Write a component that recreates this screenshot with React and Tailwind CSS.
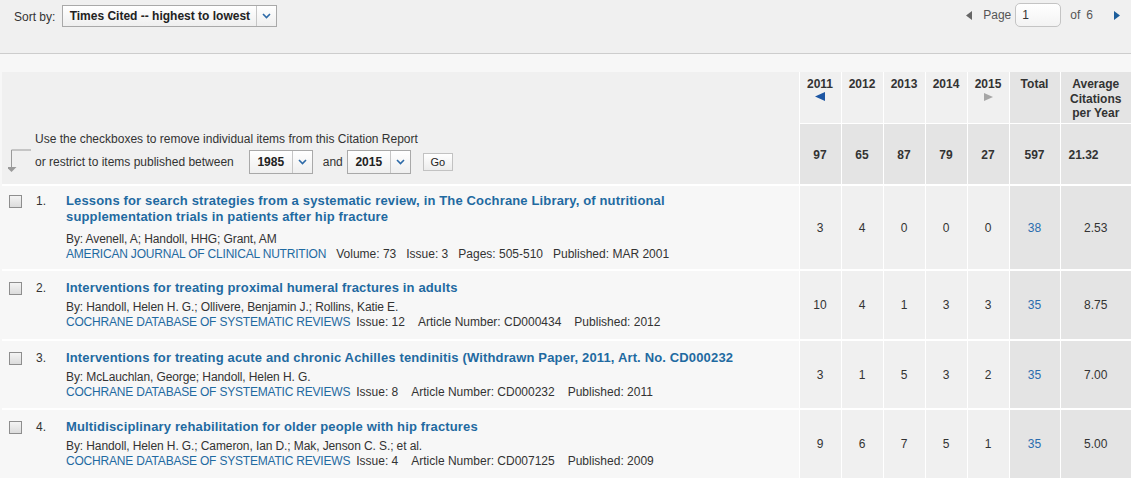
import React from "react";

const years = ["2011", "2012", "2013", "2014", "2015"];
const totals = ["97", "65", "87", "79", "27", "597", "21.32"];

const records = [
  {
    n: 1,
    title:
      "Lessons for search strategies from a systematic review, in The Cochrane Library, of nutritional supplementation trials in patients after hip fracture",
    by: "By: Avenell, A; Handoll, HHG; Grant, AM",
    journal: "AMERICAN JOURNAL OF CLINICAL NUTRITION",
    meta: ["Volume: 73", "Issue: 3", "Pages: 505-510", "Published: MAR 2001"],
    counts: ["3", "4", "0", "0", "0"],
    total: "38",
    avg: "2.53",
    h: "h-[85px]",
    first: "ml-[10px]",
    gap: "ml-[10px]",
    byGap: "mt-[7px]",
  },
  {
    n: 2,
    title: "Interventions for treating proximal humeral fractures in adults",
    by: "By: Handoll, Helen H. G.; Ollivere, Benjamin J.; Rollins, Katie E.",
    journal: "COCHRANE DATABASE OF SYSTEMATIC REVIEWS",
    meta: ["Issue: 12", "Article Number: CD000434", "Published: 2012"],
    counts: ["10", "4", "1", "3", "3"],
    total: "35",
    avg: "8.75",
    h: "h-[70px]",
    first: "ml-[6px]",
    gap: "ml-[13px]",
    byGap: "mt-[4px]",
  },
  {
    n: 3,
    title:
      "Interventions for treating acute and chronic Achilles tendinitis (Withdrawn Paper, 2011, Art. No. CD000232",
    by: "By: McLauchlan, George; Handoll, Helen H. G.",
    journal: "COCHRANE DATABASE OF SYSTEMATIC REVIEWS",
    meta: ["Issue: 8", "Article Number: CD000232", "Published: 2011"],
    counts: ["3", "1", "5", "3", "2"],
    total: "35",
    avg: "7.00",
    h: "h-[69px]",
    first: "ml-[6px]",
    gap: "ml-[13px]",
    byGap: "mt-[4px]",
  },
  {
    n: 4,
    title: "Multidisciplinary rehabilitation for older people with hip fractures",
    by: "By: Handoll, Helen H. G.; Cameron, Ian D.; Mak, Jenson C. S.; et al.",
    journal: "COCHRANE DATABASE OF SYSTEMATIC REVIEWS",
    meta: ["Issue: 4", "Article Number: CD007125", "Published: 2009"],
    counts: ["9", "6", "7", "5", "1"],
    total: "35",
    avg: "5.00",
    h: "h-[69px]",
    first: "ml-[6px]",
    gap: "ml-[13px]",
    byGap: "mt-[4px]",
  },
];

function Chevron() {
  return (
    <svg width="9" height="6" viewBox="0 0 9 6">
      <polyline points="1,1 4.5,4.5 8,1" fill="none" stroke="#2d6aa8" strokeWidth="1.6" />
    </svg>
  );
}

function SelectBox({ value, className }) {
  return (
    <div className={`flex items-stretch border border-[#a9a9a9] bg-gradient-to-b from-white to-[#efefef] ${className}`}>
      <span className="flex-1 flex items-center justify-center font-bold text-[12px] text-[#222]">{value}</span>
      <span className="w-[20px] border-l border-[#c6c6c6] flex items-center justify-center">
        <Chevron />
      </span>
    </div>
  );
}

function Checkbox() {
  return <span className="block w-[13px] h-[13px] border border-[#8e8e8e] bg-gradient-to-b from-[#f4f4f4] to-[#dcdcdc]" />;
}

export default function App() {
  return (
    <div className="w-[1131px] h-[478px] overflow-hidden bg-[#f7f7f7] text-[#333] font-['Liberation_Sans',Arial,sans-serif]">
      {/* sort + paging bar */}
      <div className="h-[54px] bg-[#f0f0f0] border-b border-[#cdcdcd] flex items-start justify-between">
        <div className="flex items-center pt-[5px] pl-[14px]">
          <span className="text-[12px] text-[#333] mr-[7px] pt-[1px]">Sort by:</span>
          <SelectBox value="Times Cited -- highest to lowest" className="w-[215px] h-[22px]" />
        </div>
        <div className="flex items-center pt-[3px] pr-[11px] text-[12px] text-[#555]">
          <svg width="6" height="9" viewBox="0 0 6 9" className="mr-[11px]">
            <polygon points="6,0 0,4.5 6,9" fill="#666" />
          </svg>
          <span className="mr-[4px]">Page</span>
          <span className="w-[46px] h-[24px] rounded-[5px] border border-[#c4c4c4] bg-gradient-to-b from-white to-[#f3f3f3] flex items-center pl-[6px] text-[#333]">1</span>
          <span className="ml-[9px]">of</span>
          <span className="ml-[6px]">6</span>
          <svg width="6" height="9" viewBox="0 0 6 9" className="ml-[21px]">
            <polygon points="0,0 6,4.5 0,9" fill="#1d5e9b" />
          </svg>
        </div>
      </div>

      <div className="pt-[18px] pl-[2px]">
        <table className="border-collapse table-fixed w-[1129px]">
          <colgroup>
            <col className="w-[797px]" />
            <col className="w-[42px]" />
            <col className="w-[42px]" />
            <col className="w-[42px]" />
            <col className="w-[42px]" />
            <col className="w-[42px]" />
            <col className="w-[51px]" />
            <col className="w-[71px]" />
          </colgroup>
          <thead>
            <tr className="h-[51px]">
              <td rowSpan={2} className="bg-[#f0f0f0] align-bottom border-r border-white">
                <div className="flex items-end pl-[6px] pb-[10px]">
                  <svg width="24" height="26" viewBox="0 0 24 26" className="mr-[3px] mb-[-1px]">
                    <polyline points="23,1 3.5,1 3.5,19" fill="none" stroke="#9a9a9a" strokeWidth="1" />
                    <polygon points="-1.5,18 8.5,18 3.5,23" fill="#9a9a9a" />
                  </svg>
                  <div className="text-[12px] text-[#333]">
                    <div className="leading-[16px] mb-[1px]">Use the checkboxes to remove individual items from this Citation Report</div>
                    <div className="flex items-center mt-[3px]">
                      <span>or restrict to items published between</span>
                      <SelectBox value="1985" className="w-[64px] h-[24px] ml-[15px]" />
                      <span className="ml-[10px]">and</span>
                      <SelectBox value="2015" className="w-[64px] h-[24px] ml-[4px]" />
                      <span className="ml-[12px] w-[30px] h-[18px] border border-[#c2c2c2] bg-gradient-to-b from-white to-[#ececec] flex items-center justify-center text-[11px] text-[#222]">
                        Go
                      </span>
                    </div>
                  </div>
                </div>
              </td>
              {years.map((y, i) => (
                <th key={y} className="bg-[#f0f0f0] border-l border-white align-top pt-[5px] text-[12px] font-bold text-[#333] leading-[14px]">
                  <div>{y}</div>
                  {i === 0 && (
                    <svg width="10" height="9" viewBox="0 0 10 9" className="mx-auto mt-[1px]">
                      <polygon points="10,0 0,4.5 10,9" fill="#1d56a3" />
                    </svg>
                  )}
                  {i === 4 && (
                    <svg width="9" height="8" viewBox="0 0 9 8" className="mx-auto mt-[2px]">
                      <polygon points="0,0 9,4 0,8" fill="#a6a6a6" />
                    </svg>
                  )}
                </th>
              ))}
              <th className="bg-[#e4e4e4] border-l border-white align-top pt-[5px] text-[12px] font-bold leading-[14px]">Total</th>
              <th className="bg-[#e4e4e4] border-l border-white align-top pt-[5px] text-[12px] font-bold leading-[14.5px]">
                Average
                <br />
                Citations
                <br />
                per Year
              </th>
            </tr>
            <tr className="h-[62px]">
              {totals.map((t, i) => (
                <td
                  key={i}
                  className={`bg-[#e4e4e4] border-l border-t border-white text-[12px] font-bold text-center align-middle pt-[2px] ${i === 6 ? "text-left pl-[8px]" : ""}`}
                >
                  {t}
                </td>
              ))}
            </tr>
          </thead>
          <tbody>
            {records.map((r) => (
              <tr key={r.n} className={`${r.h} border-t-2 border-white`}>
                <td className="bg-[#f7f7f7] align-middle">
                  <div className="flex">
                    <div className="w-[34px] pl-[7px] pt-[2px]">
                      <Checkbox />
                    </div>
                    <div className="w-[30px] text-[12px] text-[#333] leading-[16px]">{r.n}.</div>
                    <div className="max-w-[700px]">
                      <div className="text-[13px] font-bold text-[#1f6aa1] leading-[16px] tracking-[0.15px]">{r.title}</div>
                      <div className={`${r.byGap} text-[12px] leading-[15px] text-[#333] tracking-[-0.1px]`}>{r.by}</div>
                      <div className="text-[12px] leading-[15px] text-[#333]">
                        <span className="text-[#1f6aa1] tracking-[-0.2px]">{r.journal}</span>
                        {r.meta.map((m, i) => (
                          <span key={m} className={i === 0 ? r.first : r.gap}>
                            {m}
                          </span>
                        ))}
                      </div>
                    </div>
                  </div>
                </td>
                {r.counts.map((c, i) => (
                  <td key={i} className="bg-[#f0f0f0] border-l border-white text-center align-middle text-[12px] text-[#333]">
                    {c}
                  </td>
                ))}
                <td className="bg-[#e4e4e4] border-l border-white text-center align-middle text-[12px] text-[#2a6cae]">{r.total}</td>
                <td className="bg-[#e4e4e4] border-l border-white text-center align-middle text-[12px] text-[#333]">{r.avg}</td>
              </tr>
            ))}
          </tbody>
        </table>
      </div>
    </div>
  );
}
